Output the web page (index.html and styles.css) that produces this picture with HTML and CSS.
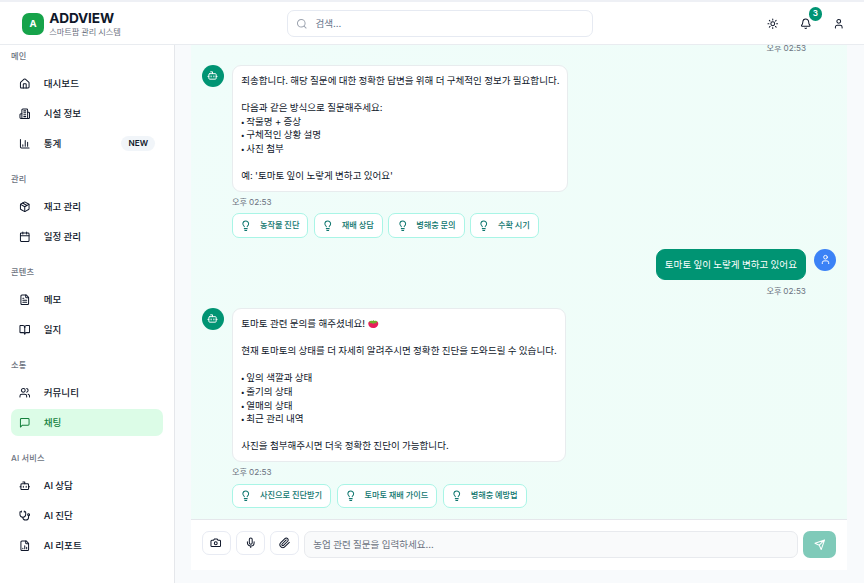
FILE: index.html
```html
<!DOCTYPE html>
<html lang="ko">
<head>
<meta charset="utf-8">
<title>ADDVIEW</title>
<link rel="stylesheet" href="styles.css">
</head>
<body>
<svg class="sprite" aria-hidden="true">
  <symbol id="home" viewBox="0 0 24 24"><path d="M15 21v-8a1 1 0 0 0-1-1h-4a1 1 0 0 0-1 1v8"/><path d="M3 10a2 2 0 0 1 .709-1.528l7-5.999a2 2 0 0 1 2.582 0l7 5.999A2 2 0 0 1 21 10v9a2 2 0 0 1-2 2H5a2 2 0 0 1-2-2z"/></symbol>
  <symbol id="building" viewBox="0 0 24 24"><path d="M6 22V4a2 2 0 0 1 2-2h8a2 2 0 0 1 2 2v18Z"/><path d="M6 12H4a2 2 0 0 0-2 2v6a2 2 0 0 0 2 2h2"/><path d="M18 9h2a2 2 0 0 1 2 2v9a2 2 0 0 1-2 2h-2"/><path d="M10 6h4M10 10h4M10 14h4M10 18h4"/></symbol>
  <symbol id="chart" viewBox="0 0 24 24"><path d="M3 3v16a2 2 0 0 0 2 2h16M18 17V9M13 17V5M8 17v-3"/></symbol>
  <symbol id="package" viewBox="0 0 24 24"><path d="M11 21.73a2 2 0 0 0 2 0l7-4A2 2 0 0 0 21 16V8a2 2 0 0 0-1-1.73l-7-4a2 2 0 0 0-2 0l-7 4A2 2 0 0 0 3 8v8a2 2 0 0 0 1 1.73z"/><path d="M12 22V12M3.3 7l8.7 5 8.7-5M7.5 4.27l9 5.15"/></symbol>
  <symbol id="calendar" viewBox="0 0 24 24"><path d="M8 2v4M16 2v4M3 10h18"/><rect width="18" height="18" x="3" y="4" rx="2"/></symbol>
  <symbol id="file" viewBox="0 0 24 24"><path d="M15 2H6a2 2 0 0 0-2 2v16a2 2 0 0 0 2 2h12a2 2 0 0 0 2-2V7Z"/><path d="M14 2v4a2 2 0 0 0 2 2h4M10 9H8M16 13H8M16 17H8"/></symbol>
  <symbol id="book" viewBox="0 0 24 24"><path d="M12 7v14"/><path d="M3 18a1 1 0 0 1-1-1V4a1 1 0 0 1 1-1h5a4 4 0 0 1 4 4 4 4 0 0 1 4-4h5a1 1 0 0 1 1 1v13a1 1 0 0 1-1 1h-6a3 3 0 0 0-3 3 3 3 0 0 0-3-3z"/></symbol>
  <symbol id="users" viewBox="0 0 24 24"><path d="M16 21v-2a4 4 0 0 0-4-4H6a4 4 0 0 0-4 4v2"/><circle cx="9" cy="7" r="4"/><path d="M22 21v-2a4 4 0 0 0-3-3.87M16 3.13a4 4 0 0 1 0 7.75"/></symbol>
  <symbol id="message" viewBox="0 0 24 24"><path d="M21 15a2 2 0 0 1-2 2H7l-4 4V5a2 2 0 0 1 2-2h14a2 2 0 0 1 2 2z"/></symbol>
  <symbol id="bot" viewBox="0 0 24 24"><path d="M12 8V4H8"/><rect width="16" height="12" x="4" y="8" rx="2"/><path d="M2 14h2M20 14h2M15 13v2M9 13v2"/></symbol>
  <symbol id="stethoscope" viewBox="0 0 24 24"><path d="M11 2v2M5 2v2M5 3H4a2 2 0 0 0-2 2v4a6 6 0 0 0 12 0V5a2 2 0 0 0-2-2h-1"/><path d="M8 15a6 6 0 0 0 12 0v-3"/><circle cx="20" cy="10" r="2"/></symbol>
  <symbol id="report" viewBox="0 0 24 24"><path d="M15 2H6a2 2 0 0 0-2 2v16a2 2 0 0 0 2 2h12a2 2 0 0 0 2-2V7Z"/><path d="M14 2v4a2 2 0 0 0 2 2h4M8 18v-1M12 18v-6M16 18v-3"/></symbol>
  <symbol id="search" viewBox="0 0 24 24"><circle cx="11" cy="11" r="8"/><path d="m21 21-4.3-4.3"/></symbol>
  <symbol id="sun" viewBox="0 0 24 24"><circle cx="12" cy="12" r="4"/><path d="M12 2v2M12 20v2M4.93 4.93l1.41 1.41M17.66 17.66l1.41 1.41M2 12h2M20 12h2M6.34 17.66l-1.41 1.41M19.07 4.93l-1.41 1.41"/></symbol>
  <symbol id="bell" viewBox="0 0 24 24"><path d="M10.268 21a2 2 0 0 0 3.464 0"/><path d="M3.262 15.326A1 1 0 0 0 4 17h16a1 1 0 0 0 .74-1.673C19.41 13.956 18 12.499 18 8A6 6 0 0 0 6 8c0 4.499-1.411 5.956-2.738 7.326"/></symbol>
  <symbol id="user" viewBox="0 0 24 24"><path d="M19 21v-2a4 4 0 0 0-4-4H9a4 4 0 0 0-4 4v2"/><circle cx="12" cy="7" r="4"/></symbol>
  <symbol id="bulb" viewBox="0 0 24 24"><path d="M15 14c.2-1 .7-1.7 1.5-2.5 1-.9 1.5-2.2 1.5-3.5A6 6 0 0 0 6 8c0 1 .2 2.2 1.5 3.5.7.7 1.3 1.5 1.5 2.5M9 18h6M10 22h4"/></symbol>
  <symbol id="camera" viewBox="0 0 24 24"><path d="M14.5 4h-5L7 7H4a2 2 0 0 0-2 2v9a2 2 0 0 0 2 2h16a2 2 0 0 0 2-2V9a2 2 0 0 0-2-2h-3z"/><circle cx="12" cy="13" r="3"/></symbol>
  <symbol id="mic" viewBox="0 0 24 24"><path d="M12 2a3 3 0 0 0-3 3v7a3 3 0 0 0 6 0V5a3 3 0 0 0-3-3Z"/><path d="M19 10v2a7 7 0 0 1-14 0v-2M12 19v3"/></symbol>
  <symbol id="clip" viewBox="0 0 24 24"><path d="m21.44 11.05-9.19 9.19a6 6 0 0 1-8.49-8.49l8.57-8.57A4 4 0 1 1 18 8.84l-8.59 8.57a2 2 0 0 1-2.83-2.83l8.49-8.48"/></symbol>
  <symbol id="send" viewBox="0 0 24 24"><path d="m22 2-7 20-4-9-9-4ZM22 2 11 13"/></symbol>
</svg>

<header class="header">
  <div class="brand">
    <div class="logo">A</div>
    <div>
      <div class="brand-name">ADDVIEW</div>
      <div class="brand-sub">스마트팜 관리 시스템</div>
    </div>
  </div>
  <div class="search"><svg class="icon"><use href="#search"/></svg><span>검색...</span></div>
  <div class="actions">
    <svg class="icon"><use href="#sun"/></svg>
    <div class="bell"><svg class="icon"><use href="#bell"/></svg><span class="badge">3</span></div>
    <svg class="icon"><use href="#user"/></svg>
  </div>
</header>

<div class="body">
  <nav class="sidebar">
    <section class="group">
      <h2>메인</h2>
      <a class="item"><svg class="icon"><use href="#home"/></svg><span>대시보드</span></a>
      <a class="item"><svg class="icon"><use href="#building"/></svg><span>시설 정보</span></a>
      <a class="item"><svg class="icon"><use href="#chart"/></svg><span>통계</span><b class="new">NEW</b></a>
    </section>
    <section class="group">
      <h2>관리</h2>
      <a class="item"><svg class="icon"><use href="#package"/></svg><span>재고 관리</span></a>
      <a class="item"><svg class="icon"><use href="#calendar"/></svg><span>일정 관리</span></a>
    </section>
    <section class="group">
      <h2>콘텐츠</h2>
      <a class="item"><svg class="icon"><use href="#file"/></svg><span>메모</span></a>
      <a class="item"><svg class="icon"><use href="#book"/></svg><span>일지</span></a>
    </section>
    <section class="group">
      <h2>소통</h2>
      <a class="item"><svg class="icon"><use href="#users"/></svg><span>커뮤니티</span></a>
      <a class="item active"><svg class="icon"><use href="#message"/></svg><span>채팅</span></a>
    </section>
    <section class="group">
      <h2>AI 서비스</h2>
      <a class="item"><svg class="icon"><use href="#bot"/></svg><span>AI 상담</span></a>
      <a class="item"><svg class="icon"><use href="#stethoscope"/></svg><span>AI 진단</span></a>
      <a class="item"><svg class="icon"><use href="#report"/></svg><span>AI 리포트</span></a>
    </section>
  </nav>

  <main class="main">
    <div class="messages">
      <div class="msg mine">
        <div class="content"><div class="time">오후 02:53</div></div>
      </div>
      <div class="msg">
        <div class="avatar"><svg class="icon"><use href="#bot"/></svg></div>
        <div class="content">
          <div class="bubble">죄송합니다. 해당 질문에 대한 정확한 답변을 위해 더 구체적인 정보가 필요합니다.

다음과 같은 방식으로 질문해주세요:
<i>•</i> 작물명 + 증상
<i>•</i> 구체적인 상황 설명
<i>•</i> 사진 첨부

예: '토마토 잎이 노랗게 변하고 있어요'</div>
          <div class="time">오후 02:53</div>
          <div class="chips">
            <span class="chip"><svg class="icon"><use href="#bulb"/></svg>농작물 진단</span>
            <span class="chip"><svg class="icon"><use href="#bulb"/></svg>재배 상담</span>
            <span class="chip"><svg class="icon"><use href="#bulb"/></svg>병해충 문의</span>
            <span class="chip"><svg class="icon"><use href="#bulb"/></svg>수확 시기</span>
          </div>
        </div>
      </div>
      <div class="msg mine">
        <div class="content">
          <div class="bubble">토마토 잎이 노랗게 변하고 있어요</div>
          <div class="time">오후 02:53</div>
        </div>
        <div class="avatar"><svg class="icon"><use href="#user"/></svg></div>
      </div>
      <div class="msg">
        <div class="avatar"><svg class="icon"><use href="#bot"/></svg></div>
        <div class="content">
          <div class="bubble">토마토 관련 문의를 해주셨네요! <svg class="tomato" viewBox="0 0 20 16"><path fill="#e81e5c" d="M0 7C0 3 4 2 10 3c6-1 10 0 10 4 0 5-4 9-10 9S0 12 0 7Z"/><path fill="#6fae2e" d="M1 3c3-2 6-2 8-1l1-2 2 2c2-1 5-1 7 1l-3 1 1 3-4-1-3 2-3-2-5 1 2-3Z"/></svg>

현재 토마토의 상태를 더 자세히 알려주시면 정확한 진단을 도와드릴 수 있습니다.

<i>•</i> 잎의 색깔과 상태
<i>•</i> 줄기의 상태
<i>•</i> 열매의 상태
<i>•</i> 최근 관리 내역

사진을 첨부해주시면 더욱 정확한 진단이 가능합니다.</div>
          <div class="time">오후 02:53</div>
          <div class="chips">
            <span class="chip"><svg class="icon"><use href="#bulb"/></svg>사진으로 진단받기</span>
            <span class="chip"><svg class="icon"><use href="#bulb"/></svg>토마토 재배 가이드</span>
            <span class="chip"><svg class="icon"><use href="#bulb"/></svg>병해충 예방법</span>
          </div>
        </div>
      </div>
    </div>
    <div class="composer">
      <div class="tool"><svg class="icon"><use href="#camera"/></svg></div>
      <div class="tool"><svg class="icon"><use href="#mic"/></svg></div>
      <div class="tool"><svg class="icon"><use href="#clip"/></svg></div>
      <div class="field">농업 관련 질문을 입력하세요...</div>
      <div class="send"><svg class="icon"><use href="#send"/></svg></div>
    </div>
  </main>
</div>
</body>
</html>
```
FILE: styles.css
```css
* { box-sizing: border-box; }

body {
  margin: 0;
  height: 583px;
  overflow: hidden;
  display: flex;
  flex-direction: column;
  background: #f8fafc;
  color: #0f172a;
  font: 9.56px/13.65px Inter, "Noto Sans CJK KR", sans-serif;
  word-spacing: -.4px;
}

.sprite { position: absolute; width: 0; height: 0; }

.icon {
  display: block;
  flex: none;
  width: 11.5px;
  height: 11.5px;
  fill: none;
  stroke: currentColor;
  stroke-width: 2.1;
  stroke-linecap: round;
  stroke-linejoin: round;
}

.header {
  flex: none;
  height: 45px;
  display: flex;
  align-items: center;
  padding: 2px 20px 0 22px;
  background: #fff;
  border-top: 2px solid #eef0f5;
  border-bottom: 1px solid #e9ecf0;
}

.brand { display: flex; align-items: center; gap: 5.2px; width: 265px; }
.logo {
  width: 22px;
  height: 22px;
  border-radius: 7px;
  background: #16a34a;
  color: #fff;
  font-weight: 700;
  line-height: 22px;
  text-align: center;
}
.brand-name { font-size: 13.65px; font-weight: 700; line-height: 16px; letter-spacing: -.15px; }
.brand-sub { font-size: 8.2px; line-height: 12px; color: #6b7280; }

.search {
  display: flex;
  align-items: center;
  gap: 8.5px;
  width: 306px;
  height: 27.3px;
  margin-top: -1px;
  padding: 0 7.5px;
  border: 1px solid #e6eaf2;
  border-radius: 7px;
  color: #64748b;
}
.search .icon { color: #9ca3af; }

.actions { display: flex; gap: 21.4px; margin-left: auto; }
.bell { position: relative; }
.badge {
  position: absolute;
  left: 9px;
  top: -11.2px;
  width: 13.6px;
  height: 13.6px;
  border-radius: 50%;
  background: #009473;
  color: #fff;
  font-size: 8.2px;
  font-weight: 600;
  text-align: center;
}

.body { flex: 1; min-height: 0; display: flex; }

.sidebar {
  width: 175px;
  padding: 6px 11px 0;
  background: #fff;
  border-right: 1px solid #e5e7eb;
}
.group { display: flex; flex-direction: column; gap: 2.73px; margin-bottom: 16.5px; }
.group h2 {
  margin: 0 0 5.5px;
  font-size: 8.2px;
  line-height: 10.9px;
  font-weight: 500;
  letter-spacing: .2px;
  color: #6b7280;
}
.item {
  display: flex;
  align-items: center;
  gap: 13.5px;
  width: 152px;
  height: 27.3px;
  padding: 0 8px 0 7.8px;
  border-radius: 7px;
  font-weight: 500;
}
.item.active { background: #dcfce7; color: #15803d; }
.new {
  margin-left: auto;
  padding: 0 7px;
  border-radius: 8px;
  background: #f1f5f9;
  font-size: 8.2px;
  line-height: 15px;
  font-weight: 600;
}

.main {
  flex: 1;
  display: flex;
  flex-direction: column;
  margin: 0 17px 13.5px 16px;
}
.messages {
  flex: 1;
  min-height: 0;
  overflow: hidden;
  display: flex;
  flex-direction: column;
  justify-content: flex-end;
  gap: 10.9px;
  padding: 10.9px;
  background: linear-gradient(135deg, #f0fdfa, #effdf8);
}
.msg { display: flex; align-items: flex-start; gap: 8.2px; }
.mine { justify-content: flex-end; }
.mine:first-child { padding-right: 30px; }
.avatar {
  width: 22px;
  height: 22px;
  display: grid;
  place-items: center;
  border-radius: 50%;
  background: #009473;
  color: #fff;
}
.avatar .icon { width: 11px; height: 11px; }
.mine .avatar { background: #3b82f6; }
.bubble {
  width: fit-content;
  padding: 8px 7.8px 7.8px 8.2px;
  border: 1px solid #e8ecee;
  border-radius: 9px;
  background: #fff;
  white-space: pre;
}
.bubble i { font-size: 7px; font-style: normal; line-height: 0; letter-spacing: -.6px; margin-left: -.6px; }
.mine .bubble { padding: 8px; background: #009473; border-color: #009473; color: #fff; }
.time { margin-top: 5.3px; font-size: 8.2px; line-height: 10.9px; color: #6b7280; }
.mine .time { text-align: right; }
.tomato { width: 10.5px; height: 8px; margin-left: .8px; vertical-align: -1px; }

.chips { display: flex; gap: 5.5px; margin-top: 5.4px; }
.chip {
  display: flex;
  align-items: center;
  gap: 8px;
  height: 24.6px;
  padding: 0 8px 0 7.4px;
  border: 1px solid #a9f5e6;
  border-radius: 7px;
  background: #fff;
  color: #0f766e;
  font-size: 8.2px;
  font-weight: 500;
}

.composer {
  flex: none;
  height: 50.5px;
  display: flex;
  align-items: flex-start;
  gap: 5.4px;
  padding: 10.9px;
  background: #fff;
  border-top: 1px solid #e5e7eb;
}
.tool {
  width: 28.7px;
  height: 24.6px;
  display: grid;
  place-items: center;
  border: 1px solid #e8ebf3;
  border-radius: 7px;
}
.field {
  flex: 1;
  height: 27.3px;
  padding: 0 8.2px;
  border: 1px solid #e8eaee;
  border-radius: 7px;
  background: #f9fafb;
  color: #6b7280;
  line-height: 25.3px;
}
.send {
  width: 32.8px;
  height: 27.3px;
  display: grid;
  place-items: center;
  border-radius: 7px;
  background: #7fcab9;
  color: #fff;
}
```
